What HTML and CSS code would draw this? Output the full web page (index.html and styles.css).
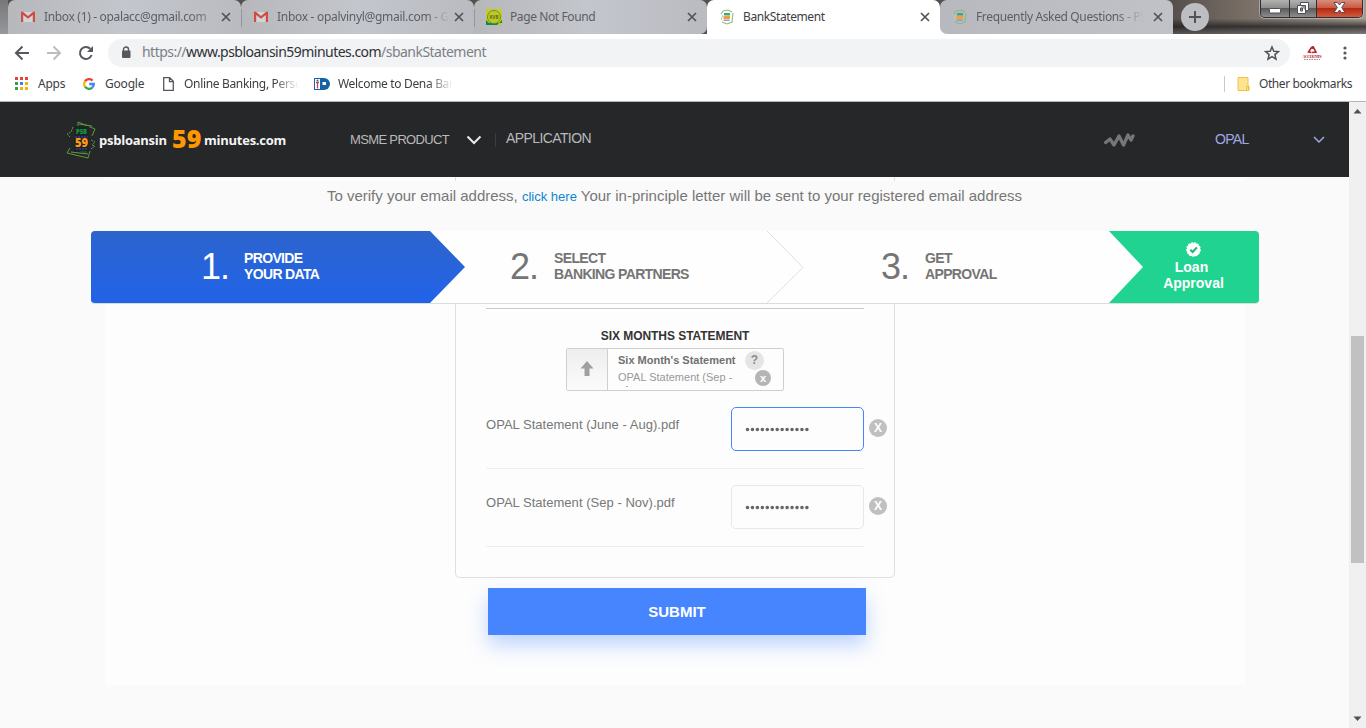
FILE: index.html
```html
<!DOCTYPE html>
<html lang="en">
<head>
<meta charset="utf-8">
<title>BankStatement</title>
<link rel="stylesheet" href="styles.css">
</head>
<body>
<svg class="defs" width="0" height="0">
  <symbol id="close" viewBox="0 0 10 10"><path d="M1 1l8 8M9 1L1 9" stroke="#505357" stroke-width="1.7" fill="none"/></symbol>
  <symbol id="gmail" viewBox="0 0 16 16"><path d="M2 3h12v10H2z" fill="#d3d4d8"/><path d="M1 13V3.500Q1 2 2.500 2.500L8 7l5.500-4.500Q15 2 15 3.500V13h-2.200V6L8 9.800 3.200 6v7z" fill="#cf4c43"/></symbol>
  <symbol id="cards" viewBox="0 0 16 16"><path d="M4 2l5-1 4 2M14 4l-1 9-5 2-5-2M2 5l2-3" fill="none" stroke="#8abb7a" stroke-width="1.100"/><path d="M5 4h6v2.500H5z" fill="#45a66f"/><path d="M4.500 7h6.500v3H4.500z" fill="#efa335"/><path d="M4.500 10.500h6v1.500h-6z" fill="#8d98d4"/><path d="M2.500 11l1-5" stroke="#b4cda8"/></symbol>
</svg>
<div class="tabstrip">
  <div class="tab first"><svg class="fav"><use href="#gmail"/></svg><span class="tab-title t1">Inbox (1) - opalacc@gmail.com</span><svg class="x"><use href="#close"/></svg></div>
  <div class="tab"><svg class="fav"><use href="#gmail"/></svg><span class="tab-title t2">Inbox - opalvinyl@gmail.com - G</span><svg class="x"><use href="#close"/></svg></div>
  <div class="tab before-active"><svg class="fav" viewBox="0 0 16 16"><path fill="#c9cc20" d="M0 0h16v16H0z"/><path fill="#168451" d="M0 11l5 5H0zM16 11l-5 5h5zM0 14h16v2H0z"/><circle cx="8" cy="8" r="6.500" fill="#c5c81e" stroke="#5e9142"/><text x="8" y="9.500" font-size="4.500" text-anchor="middle" font-weight="700" fill="#46722f">KVB</text></svg><span class="tab-title t3">Page Not Found</span><svg class="x"><use href="#close"/></svg></div>
  <div class="tab active"><svg class="fav"><use href="#cards"/></svg><span class="tab-title t4">BankStatement</span><svg class="x"><use href="#close"/></svg></div>
  <div class="tab last"><svg class="fav"><use href="#cards"/></svg><span class="tab-title t5">Frequently Asked Questions - PS</span><svg class="x"><use href="#close"/></svg></div>
  <div class="newtab"><svg width="14" height="14" viewBox="0 0 14 14"><path d="M7 1v12M1 7h12" stroke="#505256" stroke-width="2"/></svg></div>
  <div class="winbtns">
    <span class="wb min"><svg width="12" height="6" viewBox="0 0 12 6"><rect x=".5" y=".5" width="11" height="4.500" rx="1" fill="#fff" stroke="#50505c"/></svg></span>
    <span class="wb max"><svg width="12" height="12" viewBox="0 0 12 12"><path d="M3.500.5h8v8h-3v3h-8v-8h3z" fill="#fff" stroke="#50505c"/><path d="M3.500 3.500h5v5M3.500 6h2v3h-2z" fill="#999" stroke="#50505c"/></svg></span>
    <span class="wb shut"><svg width="13" height="11" viewBox="0 0 13 11"><path d="M1 .5h3.500l2 2.500 2-2.500H12L8.700 5.500l3.300 5H8.500l-2-2.500-2 2.500H1l3.300-5z" fill="#fff" stroke="#554a56"/></svg></span>
  </div>
</div>
<div class="toolbar">
  <svg class="nav" width="16" height="16" viewBox="0 0 16 16"><path d="M15 8H2M8.500 1.500L2 8l6.500 6.500" fill="none" stroke="#55585c" stroke-width="2"/></svg>
  <svg class="nav" width="16" height="16" viewBox="0 0 16 16"><path d="M1 8h13M7.500 1.500L14 8l-6.500 6.500" fill="none" stroke="#bbbdbf" stroke-width="2"/></svg>
  <svg class="nav" width="16" height="16" viewBox="0 0 16 16"><path d="M13.600 10A6 6 0 1 1 12.300 3.800" fill="none" stroke="#55585c" stroke-width="2"/><path d="M15 1v6H9z" fill="#55585c"/></svg>
  <div class="omnibox">
    <svg width="10" height="13" viewBox="0 0 10 13"><path d="M2.500 5V3.500a2.500 2.500 0 0 1 5 0V5" fill="none" stroke="#55585c" stroke-width="1.400"/><rect x="1" y="4.500" width="8.500" height="7.500" rx="1" fill="#55585c"/></svg>
    <span class="url">https://<b>www.psbloansin59minutes.com</b>/sbankStatement</span>
    <svg class="star" width="16" height="16" viewBox="0 0 16 16"><path d="M8 2l1.800 4.200 4.600.4-3.500 3 1.100 4.500L8 11.700l-4 2.400 1.100-4.500-3.500-3 4.600-.4z" fill="none" stroke="#505357" stroke-width="1.500"/></svg>
  </div>
  <svg class="ext" width="20" height="16" viewBox="0 0 20 16"><path d="M9.500 2.500L6.500 7l3 .5M11 1.500l3 5.500-4 .5" fill="none" stroke="#b82828" stroke-width="1.600"/><circle cx="10.500" cy="2.500" r="1.500" fill="#b3252a"/><text x="10" y="12.500" font-size="4.200" textLength="19" text-anchor="middle" fill="#b5252a" font-weight="700">ACCOUNTS</text><path d="M2 14.500h16" stroke="#cc7777" stroke-dasharray="1.500 1"/></svg>
  <svg class="dots" width="4" height="14" viewBox="0 0 4 14"><g fill="#55585c"><circle cx="2" cy="2" r="1.600"/><circle cx="2" cy="7" r="1.600"/><circle cx="2" cy="12" r="1.600"/></g></svg>
</div>
<div class="bookmarks">
  <svg class="b-apps" width="13" height="13" viewBox="0 0 13 13"><path fill="#ea4335" d="M0 0h3v3H0zM5 0h3v3H5zM10 0h3v3h-3z"/><path fill="#34a050" d="M0 5h3v3H0zM0 10h3v3H0z"/><path fill="#3c80ee" d="M5 5h3v3H5z"/><path fill="#f5b20a" d="M10 5h3v3h-3zM5 10h3v3H5zM10 10h3v3h-3z"/></svg>
  <span class="bt k1">Apps</span>
  <svg class="b-goog" width="12" height="12" viewBox="0 0 12 12"><g fill="none" stroke-width="2.300"><path d="M2 3.300A4.800 4.800 0 0 1 9.500 2.600" stroke="#ea4335"/><path d="M2 8.700a4.800 4.800 0 0 1 0-5.400" stroke="#fbbc05"/><path d="M9.200 9.600A4.800 4.800 0 0 1 2 8.700" stroke="#34a853"/><path d="M6.200 6h4.600a4.800 4.800 0 0 1-1.600 3.600" stroke="#4285f4"/></g></svg>
  <span class="bt k2">Google</span>
  <svg class="b-file" width="11" height="14" viewBox="0 0 11 14"><path d="M.7.7h6l3.600 3.600v9H.7zM6.500.7v4h4" fill="#fff" stroke="#55585c" stroke-width="1.300"/></svg>
  <span class="bt fade k3">Online Banking, Perso</span>
  <svg class="b-dena" width="16" height="12" viewBox="0 0 16 12"><path d="M0 0h10a6 6 0 0 1 0 12H0z" fill="#1763a7"/><path d="M1 1h5v10H1zM8.500 4h3.500v3H8.500z" fill="#fff"/><path d="M3.500 4.500v6M2 4.500h3" stroke="#cc4246" stroke-width="1.300"/><circle cx="3.500" cy="2.500" r="1" fill="#1763a7"/></svg>
  <span class="bt fade k4">Welcome to Dena Ban</span>
  <div class="other"><svg width="13" height="14" viewBox="0 0 13 14"><path d="M1 .5h10V9h1v4.500H1z" fill="#ffe48f" stroke="#eac64e"/><path d="M9.500 13V9.500h2V13" fill="none" stroke="#e7bf3c"/></svg><span class="bt k5">Other bookmarks</span></div>
</div>
<div class="viewport">
  <main class="page">
    <header class="site-head">
      <div class="logo">
        <svg width="31" height="38" viewBox="0 0 31 38"><g fill="none" stroke="#5f9a3e"><path d="M12 5V1l17 7-3 7M4 27L1 32l21 5 2-7"/><path d="M13 3l13 2M5 31l17 2"/><path d="M7 6l-2 5-4 2 3 3M25 19l4 2-3 3 3 1-4 3" stroke-dasharray="2 1"/></g><path d="M8 5h15v26H8z" fill="#202325"/><text x="15.500" y="13" font-size="6" textLength="11" class="lg-psb">PSB</text><path d="M9 16h13M10 28h11" stroke="#29367f" stroke-width="2" stroke-dasharray="2 1"/><text x="15.500" y="25.500" font-size="11.500" textLength="13" lengthAdjust="spacingAndGlyphs" class="lg-59">59</text><path d="M14 31h7" stroke="#286d39"/></svg>
        <span class="w1">psbloansin</span><span class="w59">59</span><span class="w2">minutes.com</span>
      </div>
      <nav class="menu"><span class="m1">MSME PRODUCT</span><svg width="16" height="10" viewBox="0 0 16 10"><path d="M1.500 1.500L8 8l6.500-6.500" fill="none" stroke="#ebebeb" stroke-width="2"/></svg><i class="sep"></i><span class="m2">APPLICATION</span></nav>
      <svg class="wave" width="32" height="16" viewBox="0 0 32 16"><path d="M1.700 10.500L6 7l4 6 5-9 4.500 9 4.500-10 3 5 2-4" fill="none" stroke="#777" stroke-width="3.300" stroke-linecap="round" stroke-linejoin="round"/></svg>
      <span class="user">OPAL</span>
      <svg class="chev" width="12" height="8" viewBox="0 0 12 8"><path d="M1 1l5 5 5-5" fill="none" stroke="#a0a7e2" stroke-width="1.500"/></svg>
    </header>
    <div class="peek"><i></i></div>
    <p class="notice">To verify your email address, <a>click here</a> Your in-principle letter will be sent to your registered email address</p>
    <section class="steps">
      <div class="step s1"><span class="num">1.</span><span class="lbl">PROVIDE<br>YOUR DATA</span></div>
      <div class="step s2"><span class="num">2.</span><span class="lbl">SELECT<br>BANKING PARTNERS</span></div>
      <svg class="arrow" width="37" height="72" viewBox="0 0 37 72"><path d="M0 0l36 36.500L0 72" fill="none" stroke="#dfdfdf"/></svg>
      <div class="step s3"><span class="num">3.</span><span class="lbl">GET<br>APPROVAL</span></div>
      <div class="loan"><svg width="15" height="15" viewBox="0 0 14 14"><circle cx="7" cy="7" r="6.300" fill="#fff" stroke="#fff" stroke-dasharray="2 1"/><path d="M4 7.200l2.200 2.200L10.200 5" fill="none" stroke="#21b57c" stroke-width="2"/></svg><span class="l1">Loan</span><span>Approval</span></div>
    </section>
    <section class="panel">
      <div class="card">
        <h3>SIX MONTHS STATEMENT</h3>
        <div class="upload">
          <div class="up-btn"><svg width="14" height="15" viewBox="0 0 14 15"><path d="M7 0l6.500 7.500H9.500V15h-5V7.500H.5z" fill="#a0a0a0"/></svg></div>
          <div class="up-text"><strong>Six Month's Statement</strong><span>OPAL Statement (Sep -</span><i class="speck"></i></div>
          <div class="up-side"><i class="help">?</i><i class="del small">x</i></div>
        </div>
        <div class="row"><span>OPAL Statement (June - Aug).pdf</span><div class="pw focus"><svg width="66" height="5" viewBox="0 0 66 5"><path d="M2.500 2.500h60" class="bullets"/></svg></div><i class="del">X</i></div>
        <div class="row"><span>OPAL Statement (Sep - Nov).pdf</span><div class="pw"><svg width="66" height="5" viewBox="0 0 66 5"><path d="M2.500 2.500h60" class="bullets"/></svg></div><i class="del">X</i></div>
      </div>
      <button class="submit">SUBMIT</button>
    </section>
  </main>
  <div class="scroll"><svg width="9" height="5" viewBox="0 0 9 5"><path d="M4.500 0L8.500 4.500h-8z" fill="#505050"/></svg><i class="thumb"></i><svg width="9" height="5" viewBox="0 0 9 5"><path d="M4.500 5L.5.5h8z" fill="#505050"/></svg></div>
</div>
</body>
</html>
```
FILE: styles.css
```css
* { box-sizing: border-box; }
body { margin: 0; width: 1366px; height: 728px; overflow: hidden; display: flex; flex-direction: column; font-family: "Liberation Sans", Arial, sans-serif; background: #fff; }
svg { display: block; flex: none; }
i { font-style: normal; }
.defs { position: absolute; }

/* Browser chrome */
.tabstrip { height: 34px; padding-left: 8px; display: flex; background: linear-gradient(#77777a, #98989b) 0 0 / 8px 34px no-repeat, linear-gradient(#fff, #fff) 707px 20px / 240px 14px no-repeat, linear-gradient(180deg, rgba(0,0,0,0) 55%, rgba(30,30,32,.75) 78%, rgba(90,90,94,.5)) 1173px 0 / 193px 34px no-repeat, linear-gradient(90deg, #55504c 1173px, #766c64 1240px, #a59d92 1366px); font-family: "Noto Sans", sans-serif; }
.tab { width: 233px; height: 34px; padding-left: 12px; display: flex; align-items: center; background: linear-gradient(#94969b, #94969b) 0 9px / 1px 18px no-repeat, linear-gradient(90deg, #b7b8bc, #c3c6cc 50%, #b9bbc1); border-radius: 7px 7px 0 0; }
.tab.first { background: linear-gradient(90deg, #b7b8bc, #c3c6cc 50%, #b9bbc1); }
.tab.active { background: #fff; }
.tab.before-active { border-radius: 7px 7px 7px 0; }
.tab.last { border-radius: 7px 7px 0 7px; background: linear-gradient(90deg, #b7b9be, #c0c2c7); }
.fav { width: 16px; height: 16px; }
.tab-title { width: 172px; margin-left: 8px; white-space: nowrap; font-size: 12px; line-height: 20px; letter-spacing: -.4px; color: #5c5e63; }
.t1 { letter-spacing: -.33px; -webkit-mask-image: linear-gradient(90deg, #000 145px, rgba(0,0,0,.5) 168px); }
.t2 { -webkit-mask-image: linear-gradient(90deg, #000 150px, transparent 172px); letter-spacing: -.3px; }
.t5 { -webkit-mask-image: linear-gradient(90deg, #000 140px, transparent 168px); letter-spacing: -.36px; }
.active .tab-title { color: #3c4043; }
.x { width: 10px; height: 10px; margin-left: 5px; }
.newtab { width: 28px; height: 28px; margin: 3px 0 0 8px; border-radius: 50%; background: #bdbec2; display: grid; place-items: center; }
.winbtns { margin-left: auto; margin-right: 3px; width: 103px; height: 18px; display: flex; border: 1px solid #303033; border-top: 0; border-radius: 0 0 5px 5px; overflow: hidden; box-shadow: 0 0 0 1px #ccc8; }
.wb { display: grid; place-items: center; background: linear-gradient(#b3b2b0, #8f8e8d 45%, #5b5b5d 50%, #8f8e8e); border-right: 1px solid #303033; }
.min { width: 29px; padding-top: 4px; } .max { width: 27px; padding-bottom: 2px; }
.shut { flex: 1; border: 0; padding-bottom: 2px; background: linear-gradient(#d98d7c, #c85b45 45%, #b52a12 50%, #d2593e); }
.toolbar { height: 36px; display: flex; align-items: center; padding: 1px 19px 0 14px; }
.nav { margin-right: 16px; }
.omnibox { width: 1182px; height: 28px; margin-left: -2px; border-radius: 14px; background: #f1f3f4; display: flex; align-items: center; padding: 0 10px 0 13px; }
.url { font: 14px/24px "Noto Sans", sans-serif; margin-left: 11px; letter-spacing: -.53px; color: #7b8086; white-space: nowrap; margin-top: -2px; }
.url b { font-weight: 400; color: #303134; }
.star { margin-left: auto; }
.ext { margin-left: 12px; font-family: "Liberation Serif", serif; }
.dots { margin-left: auto; }
.bookmarks { height: 32px; display: flex; align-items: center; padding: 0 15px 4px; border-bottom: 1px solid #b4b6b9; font-family: "Noto Sans", sans-serif; }
.bt { font-size: 12px; line-height: 20px; color: #3c4043; white-space: nowrap; }
.k1 { width: 45px; margin-left: 10px; letter-spacing: -.25px; }
.k2 { width: 58px; margin-left: 10px; letter-spacing: -.2px; }
.k3 { width: 116px; margin-left: 10px; letter-spacing: -.33px; }
.k4 { width: 118px; margin-left: 8px; letter-spacing: -.33px; }
.fade { -webkit-mask-image: linear-gradient(90deg, #000 90px, transparent 115px); }
.b-dena { margin-left: 14px; }
.other { margin-left: auto; height: 16px; border-left: 1px solid #c8c9cb; padding-left: 12px; display: flex; align-items: center; }
.k5 { margin-left: 9px; width: 92px; letter-spacing: -.42px; }

/* Page */
.viewport { flex: 1; display: flex; min-height: 0; }
.page { flex: 1; background: #fafafa; }
.site-head { height: 75px; background: #262729; display: flex; align-items: center; padding-left: 66px; }
.logo { width: 284px; height: 38px; display: flex; align-items: center; font-family: "Open Sans", sans-serif; color: #f4f4f4; font-weight: 700; }
.w1, .w2 { font-size: 13px; letter-spacing: -.25px; }
.w1 { width: 73px; margin-left: 2px; }
.w59 { font-size: 25px; font-weight: 800; color: #ff9800; width: 32px; line-height: 38px; margin-top: -3px; }
.lg-psb { fill: #109941; text-anchor: middle; font-weight: 800; }
.lg-59 { fill: #ff9b10; text-anchor: middle; font-weight: 800; }
.menu { display: flex; align-items: center; color: #b9b9b9; }
.m1 { width: 116px; font-size: 13px; letter-spacing: -.65px; }
.sep { width: 1px; height: 14px; background: #3b3c3e; margin: 0 10px 0 13px; }
.m2 { font-size: 14px; letter-spacing: -.6px; margin-top: -3px; width: 598px; }
.wave { margin-top: 1px; }
.user { color: #a0a7e2; font-size: 14px; letter-spacing: -.7px; margin: -2px 0 0 79px; width: 98px; }
.peek { width: 1140px; height: 4px; margin-left: 105px; background: #fdfdfd; padding-left: 350px; }
.peek i { display: block; width: 440px; height: 4px; border: solid #e0e0e0; border-width: 0 1px; }
.notice { height: 50px; margin: 0; padding-top: 6px; text-align: center; font-size: 15px; line-height: 18px; color: #777; }
.notice a { font-size: 13px; color: #0a86d1; }
.steps { width: 1168px; height: 73px; margin-left: 91px; display: flex; background: #fefefe; border-bottom: 1px solid #dcdcdc; border-radius: 4px; overflow: hidden; }
.step { display: flex; align-items: center; color: #757575; }
.s1 { width: 374px; padding-left: 110px; color: #fff; background: linear-gradient(#2d64cd, #2163e8); clip-path: polygon(0 0, 339px 0, 100% 50%, 339px 100%, 0 100%); }
.s2 { width: 302px; padding-left: 45px; }
.s3 { width: 305px; padding-left: 77px; }
.num { width: 44px; font-size: 36px; line-height: 72px; letter-spacing: -1px; }
.s1 .num { width: 43px; }
.lbl { font-size: 14px; line-height: 16px; font-weight: 700; letter-spacing: -.65px; white-space: nowrap; padding-bottom: 3px; }
.loan { flex: 1; padding: 11px 0 0 19px; background: #21d391; color: #fff; font-size: 14px; line-height: 16px; font-weight: 700; display: flex; flex-direction: column; align-items: center; clip-path: polygon(0 0, 100% 0, 100% 100%, 0 100%, 34px 50%); }
.l1 { margin: 2px 4px 0 0; }
.panel { width: 1140px; height: 381px; margin-left: 105px; padding-left: 350px; background: #fdfdfd; }
.card { width: 440px; height: 274px; border: 1px solid #dfdfe0; border-top: 0; border-radius: 0 0 5px 5px; padding: 4px 0 0 30px; }
.card h3 { width: 378px; height: 40px; margin: 0; border-top: 1px solid #c9c9c9; padding-top: 20px; text-align: center; color: #333; font-size: 12px; line-height: 14px; letter-spacing: -.05px; }
.upload { width: 218px; height: 43px; margin-left: 80px; border: 1px solid #cfcfcf; border-radius: 2px; display: flex; }
.up-btn { width: 41px; border-right: 1px solid #cfcfcf; padding: 0 1px 2px 0; display: grid; place-items: center; background: linear-gradient(#eee, #fbfbfb); }
.up-text { width: 127px; padding: 4px 0 0 10px; font-size: 11px; line-height: 14px; color: #777; white-space: nowrap; }
.up-text strong { display: block; color: #707070; }
.up-text span { display: block; height: 19px; line-height: 20px; color: #999; }
.speck { display: block; width: 2px; height: 1px; margin-left: 8px; background: #aaa; }
.up-side { padding: 2px 0 0 10px; }
.help { display: grid; place-items: center; width: 19px; height: 19px; border-radius: 50%; background: #e5e5e5; color: #8b8b8b; font-size: 12px; line-height: 14px; padding-bottom: 2px; font-weight: 700; }
.del { display: grid; place-items: center; width: 18px; height: 18px; margin-left: 5px; border-radius: 50%; background: #c0c0c0; color: #fff; font-size: 12px; line-height: 18px; font-weight: 700; }
.del.small { width: 16px; height: 16px; margin: 0 0 0 10px; font-size: 11px; line-height: 14px; background: #b5b5b5; padding-bottom: 1px; }
.row { width: 402px; height: 78px; padding-top: 16px; display: flex; color: #777; font-size: 13px; background: linear-gradient(#eee, #eee) 0 100% / 378px 1px no-repeat; }
.row span { width: 245px; padding-top: 10px; letter-spacing: .03px; }
.row .pw { width: 133px; height: 44px; border: 1px solid #e7e7ee; border-radius: 5px; padding: 19px 0 0 13px; }
.row .pw.focus { border-color: #4785ff; }
.row .del { margin-top: 12px; }
.bullets { stroke: #666; stroke-width: 3.600; stroke-linecap: round; stroke-dasharray: 0 4.950; fill: none; }
.submit { display: block; width: 378px; height: 47px; margin: 10px 0 0 33px; border: 0; padding: 1px 6px; background: #4785ff; color: #fff; font: 700 15px "Liberation Sans", sans-serif; box-shadow: 0 10px 20px rgba(71,133,255,.34); }
.scroll { width: 17px; background: #f0f0f0; display: flex; flex-direction: column; align-items: center; padding: 7px 0; }
.thumb { width: 13px; height: 227px; margin-top: 222px; margin-bottom: auto; background: #c1c1c1; }
```
